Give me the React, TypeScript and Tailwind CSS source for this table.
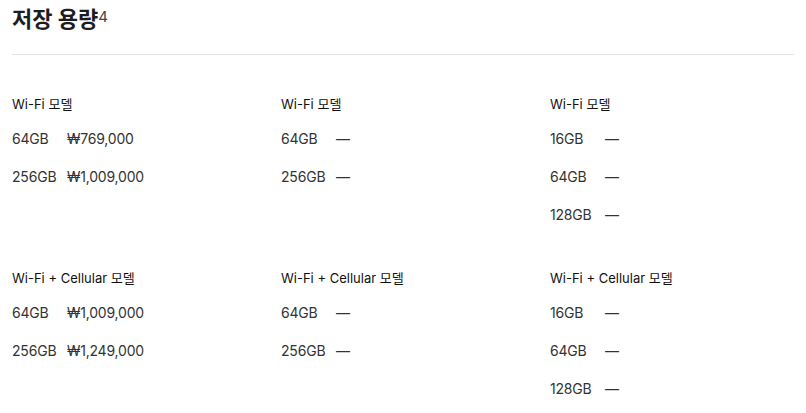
const sections = [
  {
    label: "Wi-Fi 모델",
    cols: [
      [
        ["64GB", "₩769,000"],
        ["256GB", "₩1,009,000"],
      ],
      [
        ["64GB", "—"],
        ["256GB", "—"],
      ],
      [
        ["16GB", "—"],
        ["64GB", "—"],
        ["128GB", "—"],
      ],
    ],
  },
  {
    label: "Wi-Fi + Cellular 모델",
    cols: [
      [
        ["64GB", "₩1,009,000"],
        ["256GB", "₩1,249,000"],
      ],
      [
        ["64GB", "—"],
        ["256GB", "—"],
      ],
      [
        ["16GB", "—"],
        ["64GB", "—"],
        ["128GB", "—"],
      ],
    ],
  },
];

const Column = ({ label, rows }: { label: string; rows: string[][] }) => (
  <div className="flex flex-col">
    <p className="text-[13px] font-normal leading-[22px] text-[#111]">{label}</p>
    <div className="mt-[13px] flex flex-col gap-[16px]">
      {rows.map(([size, price]) => (
        <div
          key={size}
          className="flex items-center text-[14px] leading-[22px] tracking-[-0.2px] text-[#333]"
        >
          <span className="w-[55px]">{size}</span>
          <span>{price}</span>
        </div>
      ))}
    </div>
  </div>
);

export default function App() {
  return (
    <div
      className="w-[806px] h-[413px] overflow-hidden bg-white px-[12px] pt-[4px]"
      style={{ fontFamily: 'Inter, "Noto Sans CJK KR", sans-serif' }}
    >
      <h2 className="flex items-start text-[22px] font-bold leading-[30px] text-[#1d1d1f]">
        저장 용량
        <span className="mt-[3px] text-[15px] font-normal leading-[20px] text-[#444]">4</span>
      </h2>
      <div className="mt-[20px] border-t border-[#e5e5e5]" />
      <div className="mt-[38px] flex flex-col gap-[41px]">
        {sections.map((s) => (
          <div key={s.label} className="grid grid-cols-[269px_269px_1fr]">
            {s.cols.map((rows, i) => (
              <Column key={i} label={s.label} rows={rows} />
            ))}
          </div>
        ))}
      </div>
    </div>
  );
}
